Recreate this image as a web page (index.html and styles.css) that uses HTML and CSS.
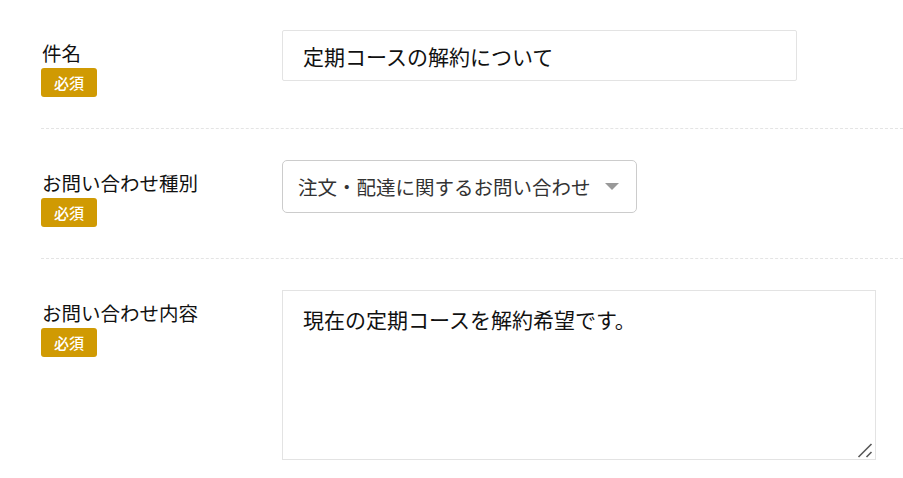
FILE: index.html
```html
<!DOCTYPE html>
<html lang="ja">
<head>
<meta charset="utf-8">
<title>お問い合わせ</title>
<link rel="stylesheet" href="styles.css">
</head>
<body>
<form class="form">
  <div class="row row-first">
    <div class="label-col">
      <div class="label">件名</div>
      <span class="badge">必須</span>
    </div>
    <div class="field-col">
      <input class="text-input" type="text" value="定期コースの解約について">
    </div>
  </div>
  <div class="row">
    <div class="label-col">
      <div class="label">お問い合わせ種別</div>
      <span class="badge">必須</span>
    </div>
    <div class="field-col">
      <div class="select">
        <span class="select-text">注文・配達に関するお問い合わせ</span>
        <span class="select-arrow"></span>
      </div>
    </div>
  </div>
  <div class="row">
    <div class="label-col">
      <div class="label">お問い合わせ内容</div>
      <span class="badge">必須</span>
    </div>
    <div class="field-col">
      <div class="textarea-wrap">
        <textarea class="textarea">現在の定期コースを解約希望です。</textarea>
        <svg class="grip" width="16" height="16" viewBox="0 0 16 16" aria-hidden="true">
          <path d="M1.5 15 L14.5 2 M9.5 15 L14.5 10" stroke="#5a5a5a" stroke-width="1.6" fill="none"/>
        </svg>
      </div>
    </div>
  </div>
</form>
</body>
</html>
```
FILE: styles.css
```css
html, body {
  margin: 0;
  padding: 0;
  background: #fff;
}
body {
  font-family: "Noto Sans CJK JP", "Noto Sans", sans-serif;
  color: #111;
  overflow: hidden;
}
.form {
  padding-left: 41px;
}
.row {
  display: flex;
  padding: 31px 0 31px;
  border-bottom: 1px dashed #e4e4e4;
}
.row-first {
  padding-top: 30px;
}
.label-col {
  width: 241px;
  flex: none;
  padding-top: 9px;
}
.label {
  font-size: 19.5px;
  line-height: 28px;
  color: #111;
  padding-left: 1px;
}
.badge {
  display: inline-flex;
  align-items: center;
  justify-content: center;
  width: 56px;
  height: 29px;
  margin-top: 1px;
  background: #d09a03;
  color: #fff;
  font-size: 15px;
  font-weight: 500;
  border-radius: 3px;
}
.field-col {
  flex: 1;
}
.text-input {
  display: block;
  box-sizing: border-box;
  width: 515px;
  height: 51px;
  border: 1px solid #e3e3e3;
  border-radius: 2px;
  padding: 0 20px;
  font-family: inherit;
  font-size: 21px;
  color: #111;
  outline: none;
}
.select {
  box-sizing: border-box;
  display: flex;
  align-items: center;
  width: 355px;
  height: 53px;
  border: 1px solid #cccccc;
  border-radius: 5px;
  padding: 0 17px 0 15px;
}
.select-text {
  font-size: 19.5px;
  color: #333;
}
.select-arrow {
  margin-left: auto;
  width: 0;
  height: 0;
  border-left: 7px solid transparent;
  border-right: 7px solid transparent;
  border-top: 7px solid #999;
}
.textarea-wrap {
  position: relative;
  width: 594px;
  height: 170px;
}
.textarea {
  display: block;
  box-sizing: border-box;
  width: 594px;
  height: 170px;
  margin: 0;
  border: 1px solid #e3e3e3;
  border-radius: 0;
  padding: 13px 20px;
  font-family: inherit;
  font-size: 21px;
  line-height: 30px;
  color: #111;
  outline: none;
  resize: none;
}
.grip {
  position: absolute;
  right: 3px;
  bottom: 2px;
}
```
